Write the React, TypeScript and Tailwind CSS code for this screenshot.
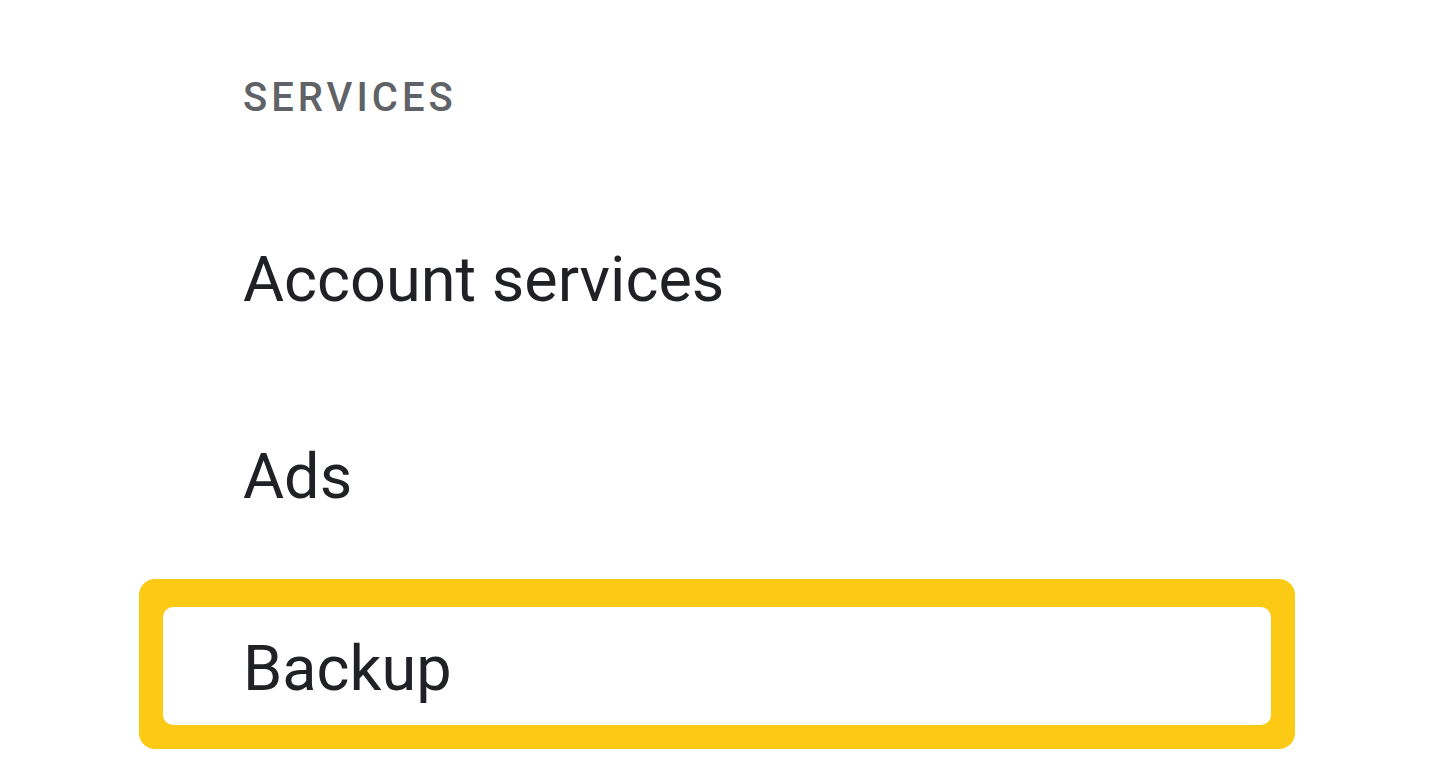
export default function App() {
  const items = ['Account services', 'Ads'];
  return (
    <div className="min-h-screen bg-white font-['Roboto',sans-serif] text-[#202124]">
      <div className="pt-[76px]">
        <h2 className="pl-[243px] text-[40px] leading-[44px] font-medium tracking-[0.1em] text-[#5f6368]">
          SERVICES
        </h2>
        <ul className="mt-[120px] flex flex-col">
          {items.map((label) => (
            <li key={label} className="pl-[243px] h-[197px] text-[63px] leading-[80px]">
              {label}
            </li>
          ))}
          <li className="-mt-[55px] ml-[139px] w-[1156px] h-[170px] rounded-[16px] bg-[#fcc914] pt-[28px] px-[24px] pb-[24px]">
            <div className="h-full rounded-[10px] bg-white pl-[80px] pt-[6px] flex items-center text-[63px]">
              Backup
            </div>
          </li>
        </ul>
      </div>
    </div>
  );
}
